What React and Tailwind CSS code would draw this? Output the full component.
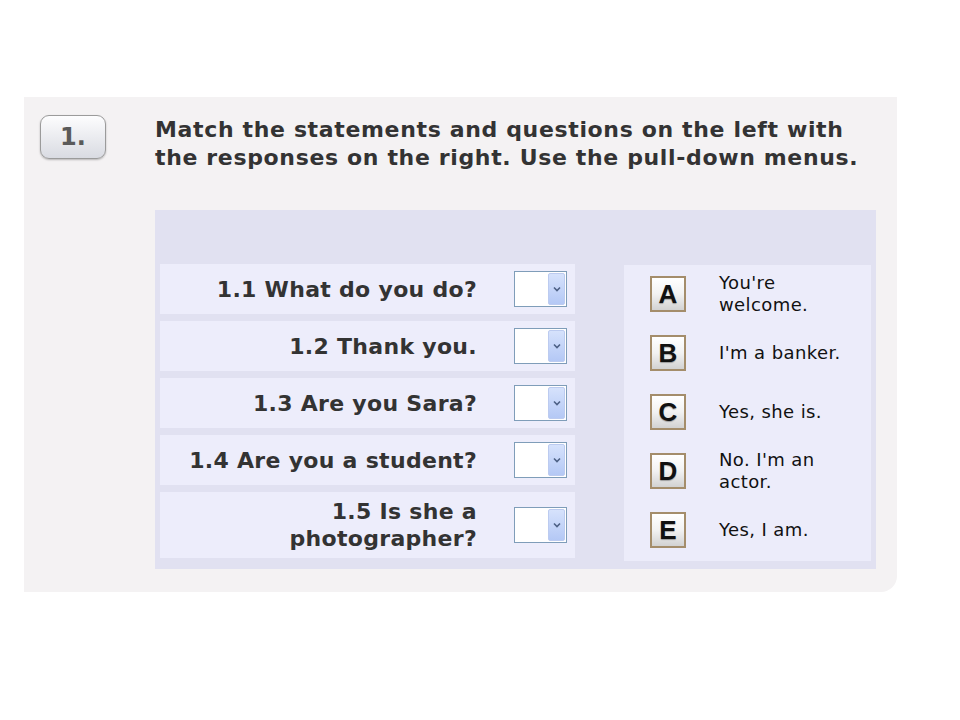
import React from 'react'

const questions = [
  { id: '1.1', lines: ['1.1 What do you do?'] },
  { id: '1.2', lines: ['1.2 Thank you.'] },
  { id: '1.3', lines: ['1.3 Are you Sara?'] },
  { id: '1.4', lines: ['1.4 Are you a student?'] },
  { id: '1.5', lines: ['1.5 Is she a', 'photographer?'] },
]

const answers = [
  { letter: 'A', text: "You're welcome." },
  { letter: 'B', text: "I'm a banker." },
  { letter: 'C', text: 'Yes, she is.' },
  { letter: 'D', text: "No. I'm an actor." },
  { letter: 'E', text: 'Yes, I am.' },
]

const verdana = { fontFamily: '"DejaVu Sans", Verdana, sans-serif' }

// Old-style XP dropdown, empty
const Dropdown = () => (
  <div className="w-[53px] h-[36px] shrink-0 bg-white border border-[#7f9db9] flex justify-end p-px">
    <div className="w-[17px] h-full rounded-[2px] bg-gradient-to-b from-[#d6e2fc] to-[#b4c8f5] border border-[#bccbf0] flex items-center justify-center">
      <svg width="8" height="6" viewBox="0 0 8 6">
        <path d="M1 1.5 L4 4.5 L7 1.5" fill="none" stroke="#4d6185" strokeWidth="1.6" />
      </svg>
    </div>
  </div>
)

const LetterBox = ({ letter }) => (
  <div className="w-[36px] h-[36px] shrink-0 border-2 border-[#a48d6b] bg-gradient-to-b from-white via-[#f2f2f2] to-[#d2d2d2] flex items-center justify-center">
    <span
      className="text-[26px] leading-none text-[#111] font-bold"
      style={{ fontFamily: '"Liberation Sans", Arial, sans-serif', textShadow: '0 1px 1px rgba(0,0,0,0.3)' }}
    >
      {letter}
    </span>
  </div>
)

export default function App() {
  return (
    <div className="w-[960px] h-[720px] bg-white pt-[97px] pl-[24px]">
      <div className="w-[873px] h-[495px] bg-[#f4f2f3] rounded-br-[16px] flex">
        {/* Number badge */}
        <div className="w-[131px] shrink-0 pl-[16px] pt-[18px]">
          <div className="w-[66px] h-[44px] rounded-[9px] border-[1.5px] border-[#9b9b9b] bg-gradient-to-b from-[#fdfdfe] to-[#d9dbe2] shadow-[0_1px_2px_rgba(0,0,0,0.25)] flex items-center justify-center">
            <span className="text-[24px] font-bold text-[#5a5a5a]" style={verdana}>1.</span>
          </div>
        </div>

        <div className="flex flex-col pt-[19px]">
          <h1 className="text-[22px] leading-[28px] font-bold text-[#333] tracking-[0.65px] whitespace-nowrap" style={verdana}>
            Match the statements and questions on the left with
            <br />
            the responses on the right. Use the pull-down menus.
          </h1>

          {/* Exercise box */}
          <div className="mt-[38px] w-[721px] h-[359px] bg-[#e1e1f1] pt-[54px] pl-[5px] pr-[5px] flex justify-between">
            <div className="w-[415px] flex flex-col gap-[7px]">
              {questions.map((q) => (
                <div
                  key={q.id}
                  className={`${q.lines.length > 1 ? 'h-[66px]' : 'h-[50px]'} bg-[#ededfb] flex items-center justify-end pr-[8px]`}
                >
                  <span
                    className="text-[22px] leading-[27px] font-bold text-[#333] text-right mr-[37px] whitespace-nowrap tracking-[0.3px]"
                    style={verdana}
                  >
                    {q.lines.map((l, i) => (
                      <React.Fragment key={i}>
                        {i > 0 && <br />}
                        {l}
                      </React.Fragment>
                    ))}
                  </span>
                  <Dropdown />
                </div>
              ))}
            </div>

            <div className="w-[247px] h-[296px] mt-[1px] bg-[#ececfa] pl-[26px] pt-[11px] flex flex-col gap-[23px]">
              {answers.map((a) => (
                <div key={a.letter} className="flex items-center h-[36px]">
                  <LetterBox letter={a.letter} />
                  <span className="ml-[33px] w-[140px] text-[18px] leading-[22px] tracking-[0.4px] text-[#111]" style={verdana}>
                    {a.text}
                  </span>
                </div>
              ))}
            </div>
          </div>
        </div>
      </div>
    </div>
  )
}
